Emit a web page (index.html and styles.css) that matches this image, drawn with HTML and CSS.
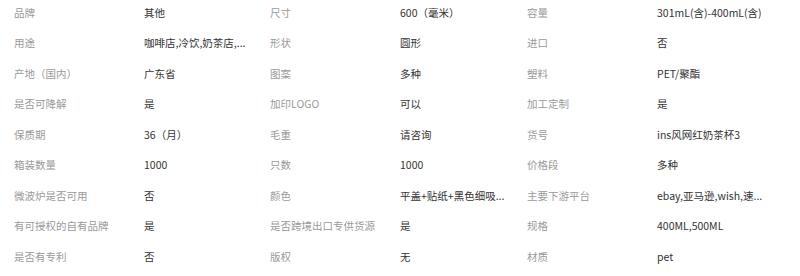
FILE: index.html
```
<!DOCTYPE html>
<html lang="zh-CN">
<head>
<meta charset="utf-8">
<title>商品属性</title>
<link rel="stylesheet" href="styles.css">
</head>
<body>
<div class="attrs">
  <span class="k">品牌</span><span class="v">其他</span>
  <span class="k">尺寸</span><span class="v">600（毫米）</span>
  <span class="k">容量</span><span class="v">301mL(含)-400mL(含)</span>

  <span class="k">用途</span><span class="v">咖啡店,冷饮,奶茶店,...</span>
  <span class="k">形状</span><span class="v">圆形</span>
  <span class="k">进口</span><span class="v">否</span>

  <span class="k">产地（国内）</span><span class="v">广东省</span>
  <span class="k">图案</span><span class="v">多种</span>
  <span class="k">塑料</span><span class="v">PET/聚酯</span>

  <span class="k">是否可降解</span><span class="v">是</span>
  <span class="k">加印LOGO</span><span class="v">可以</span>
  <span class="k">加工定制</span><span class="v">是</span>

  <span class="k">保质期</span><span class="v">36（月）</span>
  <span class="k">毛重</span><span class="v">请咨询</span>
  <span class="k">货号</span><span class="v">ins风网红奶茶杯3</span>

  <span class="k">箱装数量</span><span class="v">1000</span>
  <span class="k">只数</span><span class="v">1000</span>
  <span class="k">价格段</span><span class="v">多种</span>

  <span class="k">微波炉是否可用</span><span class="v">否</span>
  <span class="k">颜色</span><span class="v">平盖+贴纸+黑色细吸...</span>
  <span class="k">主要下游平台</span><span class="v">ebay,亚马逊,wish,速...</span>

  <span class="k">有可授权的自有品牌</span><span class="v">是</span>
  <span class="k">是否跨境出口专供货源</span><span class="v">是</span>
  <span class="k">规格</span><span class="v">400ML,500ML</span>

  <span class="k">是否有专利</span><span class="v">否</span>
  <span class="k">版权</span><span class="v">无</span>
  <span class="k">材质</span><span class="v">pet</span>
</div>
</body>
</html>
```
FILE: styles.css
```
html, body {
  margin: 0;
  padding: 0;
  background: #ffffff;
}

body {
  font-family: "Noto Sans CJK SC", "Noto Sans", sans-serif;
  font-size: 10.5px;
  overflow: hidden;
}

.attrs {
  display: grid;
  grid-template-columns: 130px 126px 130px 127px 130px 1fr;
  grid-auto-rows: 30.5px;
  align-items: center;
  padding-left: 14px;
  margin-top: -3px;
}

.k {
  color: #9a9a9a;
  white-space: nowrap;
  overflow: hidden;
}

.v {
  color: #333333;
  white-space: nowrap;
  overflow: hidden;
  text-overflow: ellipsis;
}
```
